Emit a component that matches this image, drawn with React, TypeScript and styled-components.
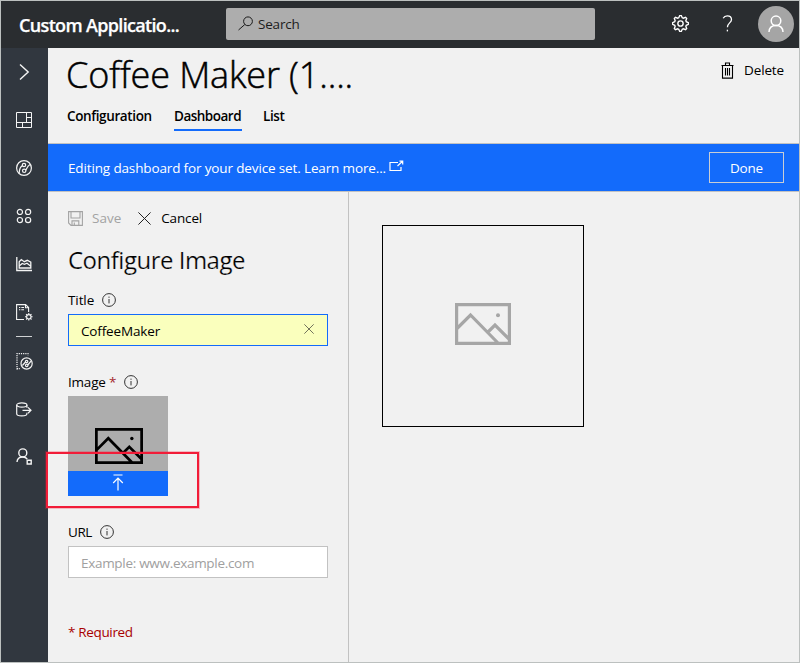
import React from 'react';
import styled, { createGlobalStyle, css } from 'styled-components';

const GlobalStyle = createGlobalStyle`
  * { box-sizing: border-box; }
  body { margin: 0; background: #f1f1f1; }
  button, input { font: inherit; color: inherit; }
`;

const BLUE = '#136bfb';
const LINE = '#c2c2c2';

const Frame = styled.div`
  position: relative;
  display: flex;
  flex-direction: column;
  width: 800px;
  height: 663px;
  overflow: hidden;
  border: 1px solid #bcc0bf;
  background: #f1f1f1;
  color: #000;
  font: 400 13.5px/20px 'Open Sans', 'Noto Sans', sans-serif;
  white-space: nowrap;
`;

const Text = styled.span<{ $track?: number }>`
  letter-spacing: ${(p) => p.$track ?? 0}px;
`;

const TopBar = styled.header`
  display: flex;
  flex: none;
  height: 47px;
  padding: 0 5px 0 18px;
  background: #2a2d30;
  color: #fff;
`;

const Brand = styled.div`
  width: 207px;
  padding-top: 12px;
  font-size: 18px;
  font-weight: 600;
  line-height: 24px;
  letter-spacing: -0.66px;
  -webkit-text-stroke: 0.25px #fff;
`;

const SearchBox = styled.div`
  display: flex;
  align-items: center;
  width: 369px;
  height: 32px;
  margin-top: 7px;
  padding-left: 12px;
  gap: 4px;
  border-radius: 2px;
  background: #adadad;
  color: #1c1c1c;
`;

const TopActions = styled.div`
  display: flex;
  align-items: center;
  height: 46px;
  margin-left: auto;
`;

const TopIcon = styled.div<{ $width: number }>`
  display: flex;
  justify-content: center;
  width: ${(p) => p.$width}px;
  margin-top: -2px;
`;

const Avatar = styled.div`
  display: flex;
  align-items: center;
  justify-content: center;
  width: 36px;
  height: 36px;
  border-radius: 50%;
  background: #a5a5a5;
`;

const Body = styled.div`
  display: flex;
  flex: 1;
  min-height: 0;
`;

const Nav = styled.nav`
  display: flex;
  flex: none;
  flex-direction: column;
  align-items: center;
  width: 47px;
  padding-right: 1px;
  background: #31373f;
  color: #f4f4f4;
`;

const NavItem = styled.div`
  display: flex;
  align-items: center;
  justify-content: center;
  width: 46px;
  height: 48px;
`;

const NavDivider = styled.div`
  width: 16px;
  height: 1px;
  background: #d0d2d4;
`;

const Main = styled.main`
  display: flex;
  flex: 1;
  flex-direction: column;
  min-width: 0;
`;

const PageHeader = styled.div`
  display: flex;
  justify-content: space-between;
  height: 95px;
  padding: 0 15px 0 18px;
`;

const PageTitle = styled.h1`
  margin: 2px 0 0;
  font-size: 36px;
  font-weight: 300;
  line-height: 50px;
  letter-spacing: -0.12px;
  -webkit-text-stroke: 0.5px #000;
`;

const Tabs = styled.div`
  display: flex;
  gap: 21px;
  margin: 7px 0 0 1px;
`;

const Tab = styled.div<{ $active?: boolean; $width: number; $track: number }>`
  width: ${(p) => p.$width}px;
  height: 24px;
  line-height: 18px;
  font-weight: 600;
  letter-spacing: ${(p) => p.$track}px;
  ${(p) =>
    p.$active &&
    css`
      border-bottom: 2px solid ${BLUE};
    `}
`;

const Command = styled.div<{ $gap: number; $muted?: boolean }>`
  display: flex;
  align-items: center;
  height: 20px;
  gap: ${(p) => p.$gap}px;
  color: ${(p) => (p.$muted ? '#a3a3a3' : '#000')};
`;

const DeleteSlot = styled.div`
  padding-top: 12px;
`;

const Banner = styled.div`
  display: flex;
  align-items: center;
  flex: none;
  height: 49px;
  padding: 0 15px 0 20px;
  border: solid ${LINE};
  border-width: 1px 0;
  background: ${BLUE};
  color: #fff;
`;

const ExternalLink = styled.span`
  display: flex;
  margin: -4px 0 0 3px;
`;

const DoneButton = styled.button`
  width: 75px;
  height: 31px;
  margin-left: auto;
  padding: 0;
  border: 1px solid #c9cdd4;
  background: transparent;
`;

const Columns = styled.div`
  display: flex;
  flex: 1;
`;

const Panel = styled.section`
  width: 301px;
  padding: 16px 20px 0;
  border-right: 1px solid ${LINE};
`;

const CommandRow = styled.div`
  display: flex;
  gap: 17px;
`;

const PanelTitle = styled.h2`
  margin: 15px 0 0;
  font-size: 24px;
  font-weight: 400;
  line-height: 34px;
  letter-spacing: -0.5px;
  -webkit-text-stroke: 0.2px #f1f1f1;
`;

const Label = styled.div<{ $top: number; $gap: number }>`
  display: flex;
  align-items: center;
  height: 20px;
  margin-top: ${(p) => p.$top}px;
  gap: ${(p) => p.$gap}px;
`;

const Star = styled.span`
  color: #a4262c;
`;

const Field = styled.div<{ $filled?: boolean; $top: number }>`
  display: flex;
  align-items: center;
  justify-content: space-between;
  width: 260px;
  height: 32px;
  margin-top: ${(p) => p.$top}px;
  padding: 1px 13px 0 12px;
  border: 1px solid ${(p) => (p.$filled ? BLUE : LINE)};
  background: ${(p) => (p.$filled ? '#faffbd' : '#fff')};
  color: ${(p) => (p.$filled ? '#000' : '#a0a0a0')};
`;

const FieldClear = styled.span`
  display: flex;
  margin-top: -3px;
`;

const Upload = styled.div`
  position: relative;
  display: flex;
  flex-direction: column;
  width: 100px;
  height: 100px;
  margin-top: 4px;
  background: #adadad;
`;

const UploadPreview = styled.div`
  display: flex;
  justify-content: center;
  height: 75px;
  padding: 32px 0 0 1px;
`;

const UploadBar = styled.div`
  display: flex;
  align-items: center;
  justify-content: center;
  height: 25px;
  padding-bottom: 3px;
  background: ${BLUE};
  color: #fff;
`;

const Highlight = styled.div`
  position: absolute;
  left: -22px;
  top: 56px;
  width: 153px;
  height: 56px;
  border: 2px solid #f21c38;
  box-shadow: 0 0 0 1px rgba(242, 28, 56, 0.25);
`;

const Required = styled.div`
  margin-top: 44px;
  color: #a80000;
`;

const Canvas = styled.section`
  flex: 1;
  padding: 33px;
`;

const Tile = styled.div`
  display: flex;
  align-items: center;
  justify-content: center;
  width: 202px;
  height: 202px;
  padding-bottom: 4px;
  border: 1px solid #000;
`;

const Svg = styled.svg`
  display: block;
  flex: none;
  fill: none;
  stroke: currentColor;
`;

const InfoIcon = () => (
  <Svg width="14" height="14" viewBox="0 0 14 14" strokeWidth="1">
    <circle cx="7" cy="7" r="6.4" stroke="#333" />
    <path d="M7 6v4.400M7 3.600v1.200" stroke="#333" />
  </Svg>
);

const CrossIcon = ({ size, color }: { size: number; color: string }) => (
  <Svg width={size} height={size} viewBox="0 0 12 12" strokeWidth={12 / size}>
    <path d="M.4.4l11.2 11.2M11.6.4L.4 11.6" stroke={color} />
  </Svg>
);

const PictureIcon = ({ width, height, color }: { width: number; height: number; color: string }) => (
  <Svg width={width} height={height} viewBox="0 0 56 42">
    <path
      d="M1.6 1.6h52.8v38.8H1.6zM2 25.5L15.5 12l28 28.5M32.5 29.5L40 22l14.5 14.5"
      stroke={color}
      strokeWidth="3.2"
    />
    <circle cx="43" cy="12.3" r="2" fill={color} stroke="none" />
  </Svg>
);

const PersonIcon = () => (
  <Svg width="16" height="18" viewBox="0 0 16 18" strokeWidth="1.5">
    <circle cx="8" cy="5.8" r="4.8" />
    <path d="M1 17c.2-4 3-6.4 7-6.4s6.8 2.4 7 6.4" />
  </Svg>
);

const gearPath =
  Array.from({ length: 32 }, (_, i) => {
    const tooth = i % 4 === 1 || i % 4 === 2;
    const radius = tooth ? 7.5 : 5.7;
    const angle = ((i - 1.5) / 32) * Math.PI * 2;
    return `${i ? 'L' : 'M'}${(8 + radius * Math.cos(angle)).toFixed(2)} ${(8 + radius * Math.sin(angle)).toFixed(2)}`;
  }).join('') + 'Z';

const GearIcon = ({ size, weight }: { size: number; weight: number }) => (
  <Svg width={size} height={size} viewBox="0 0 16 16" strokeWidth={weight}>
    <path d={gearPath} />
    <circle cx="8" cy="8" r="2.5" />
  </Svg>
);

const navIcons: React.ReactNode[] = [
  <Svg width="16" height="18" viewBox="0 0 16 18" strokeWidth="1.4">
    <path d="M4 1.500L12.200 9 4 16.500" />
  </Svg>,
  <Svg width="16" height="16" viewBox="0 0 16 16">
    <path d="M.5.5h15v15H.5zM10.5.5v10M.5 10.5h15M10.5 5.5h5M6.5 10.5v5" />
  </Svg>,
  <Svg width="16" height="16" viewBox="0 0 16 16" strokeWidth="1.2">
    <circle cx="8" cy="8" r="7.4" />
    <circle cx="8" cy="5" r="1.7" />
    <circle cx="8.2" cy="10.8" r="1.7" />
    <path d="M6.4 5.6C3.8 7 3.3 9 3.2 13M9.8 10.2C11 8 11.5 5.8 14 4.4" />
  </Svg>,
  <Svg width="16" height="16" viewBox="0 0 16 16" strokeWidth="1.2">
    <circle cx="3.9" cy="3.900" r="2.600" />
    <circle cx="12.100" cy="3.900" r="2.600" />
    <circle cx="3.900" cy="12.100" r="2.600" />
    <circle cx="12.100" cy="12.100" r="2.600" />
  </Svg>,
  <Svg width="16" height="16" viewBox="0 0 16 16" strokeWidth="1.3">
    <path d="M.8 1v13.500H16" />
    <path d="M3.2 12V5.700l2.100-2.200 3 2.200 3-1.400 3.500 1.900V12z" />
    <path d="M3.200 10l3-2.500 2.200.8L11 7.200l3.800 3" />
  </Svg>,
  <Svg width="17" height="17" viewBox="0 0 17 17" strokeWidth="1.1">
    <path d="M8 15.500H.6V.6h9l3 3V8M9.500.8v3h3" />
    <path d="M3 3.500h1.300M5.300 3.500H8M3 5.700h1.300M5.300 5.700H8" />
    <circle cx="12.800" cy="12.800" r="2.200" />
    <path d="M12.800 9v1.600M12.800 15v1.600M9 12.800h1.600M15 12.800h1.600M10.100 10.100l1.100 1.100M14.400 14.400l1.100 1.100M15.500 10.100l-1.100 1.100M11.200 14.400l-1.100 1.100" />
  </Svg>,
  <Svg width="17" height="17" viewBox="0 0 17 17" strokeWidth="1.2">
    <path d="M1 16.500V.6h11v2" strokeDasharray="1.2 1" />
    <path d="M1 15.600h3" strokeDasharray="1.2 1" />
    <circle cx="10.600" cy="10.500" r="5.600" />
    <circle cx="10.600" cy="8.500" r="1.200" />
    <circle cx="10.700" cy="12.400" r="1.200" />
    <path d="M9.500 9L6.400 12.500M11.800 12L15 8.200" />
  </Svg>,
  <Svg width="16" height="15" viewBox="0 0 16 15" strokeWidth="1.2">
    <ellipse cx="5.800" cy="3" rx="5.100" ry="2.100" />
    <path d="M.7 3v8.800c0 1.100 2.300 2.100 5.100 2.100s5.100-1 5.100-2.100v-1M10.900 3v2.800M6.500 8.300h8.300M12 5.400l3 2.900-3 2.900" />
  </Svg>,
  <Svg width="16" height="18" viewBox="0 0 16 18" strokeWidth="1.4">
    <circle cx="6.800" cy="4.900" r="4" />
    <path d="M1 14c.2-3.300 2.400-5 5.800-5 2 0 3.400.7 4.400 2" />
    <path d="M11.200 12.200h4v3.800h-4z" />
  </Svg>,
];

export default function App() {
  return (
    <>
      <GlobalStyle />
      <Frame>
        <TopBar>
          <Brand>Custom Applicatio...</Brand>
          <SearchBox>
            <Svg width="16" height="16" viewBox="0 0 16 16" strokeWidth="1">
              <circle cx="10" cy="5.300" r="4.400" />
              <path d="M6.800 8.500L.5 14" />
            </Svg>
            <Text $track={-0.2}>Search</Text>
          </SearchBox>
          <TopActions>
            <TopIcon $width={34}>
              <GearIcon size={17} weight={1.3} />
            </TopIcon>
            <TopIcon $width={61}>
              <Svg width="11" height="17" viewBox="0 0 11 17" strokeWidth="1.3">
                <path d="M1.200 3.200C2 1.600 3.400.8 5.200.8c2.600 0 4.300 1.400 4.300 3.600 0 3.400-4.100 3.600-4.100 7.800" />
                <path d="M5.400 14.700v1.700" />
              </Svg>
            </TopIcon>
            <Avatar>
              <PersonIcon />
            </Avatar>
          </TopActions>
        </TopBar>
        <Body>
          <Nav>
            {navIcons.map((icon, i) => (
              <React.Fragment key={i}>
                {i === 6 && <NavDivider />}
                <NavItem>{icon}</NavItem>
              </React.Fragment>
            ))}
          </Nav>
          <Main>
            <PageHeader>
              <div>
                <PageTitle>Coffee Maker (1....</PageTitle>
                <Tabs>
                  <Tab $width={86} $track={-0.38}>Configuration</Tab>
                  <Tab $width={68} $track={-0.5} $active>Dashboard</Tab>
                  <Tab $width={24} $track={-0.4}>List</Tab>
                </Tabs>
              </div>
              <DeleteSlot>
                <Command $gap={9}>
                  <Svg width="14" height="17" viewBox="0 0 14 17" strokeWidth="1.1">
                    <path d="M.5 3.500h12M4.500 3V1h4v2M1.500 3.500v12.600h10V3.500M4.500 6v7.500M6.500 6v7.500M8.500 6v7.500" />
                  </Svg>
                  <Text $track={-0.13}>Delete</Text>
                </Command>
              </DeleteSlot>
            </PageHeader>
            <Banner>
              <Text $track={-0.14}>Editing dashboard for your device set. Learn more...</Text>
              <ExternalLink>
                <Svg width="15" height="12" viewBox="0 0 15 12" strokeWidth="1.2">
                  <path d="M9 2.500H1v8h11V7M8.500 6L13.500 1.200M10.500 1.200h3.200v3.200" />
                </Svg>
              </ExternalLink>
              <DoneButton>
                <Text $track={-0.2}>Done</Text>
              </DoneButton>
            </Banner>
            <Columns>
              <Panel>
                <CommandRow>
                  <Command $gap={9} $muted>
                    <Svg width="15" height="15" viewBox="0 0 15 15" strokeWidth="1.1">
                      <path d="M.6.6h13.800v13.800H3L.6 12zM3 .6v6.400h9V.6M4 14.400v-4.500h6.800v4.500M6.300 11.500v2.900" />
                    </Svg>
                    <Text>Save</Text>
                  </Command>
                  <Command $gap={10}>
                    <CrossIcon size={13} color="#222" />
                    <Text $track={-0.15}>Cancel</Text>
                  </Command>
                </CommandRow>
                <PanelTitle>Configure Image</PanelTitle>
                <Label $top={13} $gap={8}>
                  <Text $track={-0.1}>Title</Text>
                  <InfoIcon />
                </Label>
                <Field $filled $top={4}>
                  <Text $track={-0.15}>CoffeeMaker</Text>
                  <FieldClear>
                    <CrossIcon size={10} color="#72735c" />
                  </FieldClear>
                </Field>
                <Label $top={26} $gap={8}>
                  <Text $track={-0.2}>
                    Image <Star>*</Star>
                  </Text>
                  <InfoIcon />
                </Label>
                <Upload>
                  <UploadPreview>
                    <PictureIcon width={48} height={36} color="#000" />
                  </UploadPreview>
                  <UploadBar>
                    <Svg width="12" height="17" viewBox="0 0 12 17" strokeWidth="1.2">
                      <path d="M1.500 1h9M6 16.500V4.500M1.200 9L6 4.200 10.800 9" />
                    </Svg>
                  </UploadBar>
                  <Highlight />
                </Upload>
                <Label $top={26} $gap={8}>
                  <Text $track={-0.4}>URL</Text>
                  <InfoIcon />
                </Label>
                <Field $top={4}>
                  <Text $track={-0.3}>Example: www.example.com</Text>
                </Field>
                <Required>
                  <Text $track={-0.34}>* Required</Text>
                </Required>
              </Panel>
              <Canvas>
                <Tile>
                  <PictureIcon width={56} height={42} color="#a6a6a6" />
                </Tile>
              </Canvas>
            </Columns>
          </Main>
        </Body>
      </Frame>
    </>
  );
}
